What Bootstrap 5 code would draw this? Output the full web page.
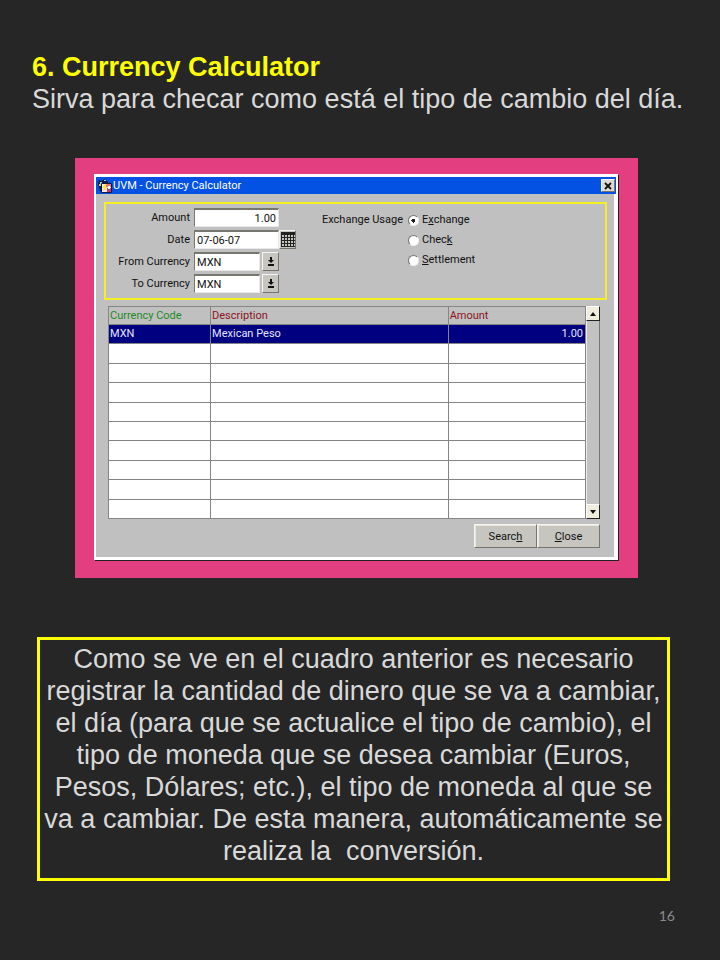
<!DOCTYPE html>
<html lang="es">
<head>
<meta charset="utf-8">
<meta name="viewport" content="width=device-width, initial-scale=1">
<title>Currency Calculator</title>
<link href="https://cdn.jsdelivr.net/npm/bootstrap@5.3.0/dist/css/bootstrap.min.css" rel="stylesheet">
<style>
  body { background: #262626; color: #d9d9d9; font: 27px/32px "Liberation Sans", Arial, sans-serif; }
  .slide { padding: 51px 32px 32px; }
  .slide-title { font-size: 27px; line-height: 32px; color: #ff0; }
  .stage { background: #e23e80; margin: 43px 50px 0 43px; padding: 16px 20px 18px 19px; }
  .win { background: #c0c0c0; border: 2px solid #fff; border-width: 3px 4px 3px 2px; box-shadow: 1px 1px 0 #222; color: #111; font-family: Roboto, "Liberation Sans", sans-serif; font-size: 11px; line-height: 14px; }
  .win-bar { background: #0452e4; color: #fff; height: 17px; padding: 0 1px 0 2px; margin-right: -2px; }
  .win-bar h2 { font-size: 11px; line-height: 17px; }
  .raised { background: #c6c5c0; border: 1px solid; border-color: #f4f4f0 #77746c #77746c #f4f4f0; color: #111; border-radius: 0; padding: 0; line-height: 1; }
  .close-x { width: 14px; height: 13px; background: #dedbd2; }
  .win-body { padding: 8px 14px 9px 8px; }
  .query { border: 2px solid #f4ee26; padding: 4px 4px 5px 0; margin-right: -7px; }
  .fields { display: grid; grid-template-columns: 84px auto; column-gap: 4px; row-gap: 3px; grid-auto-rows: 19px; align-items: center; }
  .fields label { text-align: right; }
  .field { background: #fff; border: 1px solid #e8e8e8; border-top: 2px solid #77776f; border-left-color: #77776f; color: #111; width: 85px; height: 19px; padding: 0 2px; line-height: 14px; border-radius: 0; }
  .field-code { width: 66px; }
  .tool { width: 17px; height: 19px; }
  .lov { gap: 2px; }
  .usage { margin-left: 26px; padding-top: 5px; }
  .usage-label { width: 86px; }
  .choice { height: 20px; line-height: 14px; gap: 3px; }
  .choice input { appearance: none; width: 11px; height: 11px; margin: 2px 0 0; border-radius: 50%; background: #fff; border: 1px solid; border-color: #77756c #f0f0ec #f0f0ec #77756c; }
  .choice input:checked { background: radial-gradient(circle, #222 0 2px, #fff 2px); }
  .results { margin: 6px 0 0 4px; }
  .grid-data { table-layout: fixed; border-collapse: collapse; color: #111; height: 213px; }
  .grid-data th, .grid-data td { border: 1px solid #858585; padding: 0 2px 0 1px; font-weight: 400; line-height: 14px; }
  .grid-data td { background: #fff; height: 19px; }
  .grid-data th { color: #8a1520; height: 18px; }
  .grid-data th.key { color: #1d8a22; }
  .grid-data .picked td { background: #000080; color: #e6e6ff; }
  .c-code { width: 21.4%; }
  .c-amt { width: 28.8%; }
  .scroller { width: 14px; background: #c2c2c2; border-right: 1px solid #77756c; border-left: 1px solid #eee; }
  .scroller .raised { width: 14px; height: 15px; margin-left: -1px; background: #f0eddc; border-color: #fff #222 #222 #fff; }
  .actions { margin-top: 5px; }
  .actions .raised { width: 63px; height: 24px; font-size: 11px; box-shadow: inset 1px 1px 0 #e8e6df; }
  .note { border: 3px solid #ff0; margin: 59px 18px 0 5px; padding: 3px 2px 11px; }
  .page-no { font: 14px/18px Lato, sans-serif; color: #8b8b8b; margin: 26px 13px 0 0; }
  .win svg { display: block; }
</style>
<script src="https://cdn.jsdelivr.net/npm/bootstrap@5.3.0/dist/js/bootstrap.bundle.min.js"></script>
</head>
<body>
<main class="slide">
  <h1 class="slide-title fw-bold m-0">6. Currency Calculator</h1>
  <p class="m-0">Sirva para checar como está el tipo de cambio del día.</p>

  <section class="stage">
    <div class="win">
      <header class="win-bar d-flex align-items-center">
        <svg width="15" height="16" viewBox="0 0 15 16" aria-hidden="true">
          <path d="M1 2l3 1 2-2 2 1 2 2v2H3v7H2L1 9 0 6z" fill="#151a3c"/>
          <path d="M2 4h2v2H2zM6 2h2v1H6z" fill="#7ee0e0"/><path d="M1 6h2v2H1z" fill="#e8c84c"/>
          <path d="M3.5 5.500h10v9h-10z" fill="#f7e9ef" stroke="#181840"/>
          <path d="M8 6h5v3H8z" fill="#e86b94"/><path d="M9 10h4v4H9z" fill="#c43a76"/>
          <path d="M7 6L4 10h2l-2 4 5-5H7l2-3z" fill="#ffe818"/><path d="M10 8h2v3h-2z" fill="#fff"/>
        </svg>
        <h2 class="m-0 fw-normal flex-grow-1">UVM - Currency Calculator</h2>
        <button type="button" class="raised close-x d-flex align-items-center justify-content-center" aria-label="Close window">
          <svg width="8" height="8" viewBox="0 0 8 8"><path d="M1 1l6 6M7 1L1 7" stroke="#111" stroke-width="1.8"/></svg>
        </button>
      </header>
      <div class="win-body">
        <form class="query d-flex align-items-start">
          <div class="fields">
            <label for="amount">Amount</label>
            <input id="amount" class="field text-end" value="1.00">
            <label for="date">Date</label>
            <div class="d-flex">
              <input id="date" class="field" value="07-06-07">
              <button type="button" class="raised tool d-flex align-items-center justify-content-center" aria-label="Calendar">
                <svg width="14" height="15" viewBox="0 0 14 15"><path d="M0 0h14v3H0z" fill="#222"/><path d="M.5 1v14M3.5 1v14M6.5 1v14M9.5 1v14M12.5 1v14M0 5.500h14M0 8.500h14M0 11.500h14M0 14.500h14" stroke="#222"/></svg>
              </button>
            </div>
            <label for="from">From Currency</label>
            <div class="lov d-flex">
              <input id="from" class="field field-code" value="MXN">
              <button type="button" class="raised tool d-flex align-items-center justify-content-center" aria-label="List of currencies">
                <svg width="8" height="9" viewBox="0 0 8 9"><path d="M3 0h2v3h2L4 6 1 3h2zM1 7h6v2H1z" fill="#111"/></svg>
              </button>
            </div>
            <label for="to">To Currency</label>
            <div class="lov d-flex">
              <input id="to" class="field field-code" value="MXN">
              <button type="button" class="raised tool d-flex align-items-center justify-content-center" aria-label="List of currencies">
                <svg width="8" height="9" viewBox="0 0 8 9"><path d="M3 0h2v3h2L4 6 1 3h2zM1 7h6v2H1z" fill="#111"/></svg>
              </button>
            </div>
          </div>
          <div class="usage d-flex" role="radiogroup" aria-labelledby="usage-label">
            <span id="usage-label" class="usage-label">Exchange Usage</span>
            <div>
              <div class="choice d-flex"><input type="radio" name="usage" id="u1" checked><label for="u1">E<u>x</u>change</label></div>
              <div class="choice d-flex"><input type="radio" name="usage" id="u2"><label for="u2">Chec<u>k</u></label></div>
              <div class="choice d-flex"><input type="radio" name="usage" id="u3"><label for="u3"><u>S</u>ettlement</label></div>
            </div>
          </div>
        </form>

        <div class="results d-flex">
          <table class="grid-data flex-grow-1">
            <colgroup><col class="c-code"><col><col class="c-amt"></colgroup>
            <thead><tr><th class="key">Currency Code</th><th>Description</th><th>Amount</th></tr></thead>
            <tbody>
              <tr class="picked"><td>MXN</td><td>Mexican Peso</td><td class="text-end">1.00</td></tr>
              <tr><td></td><td></td><td></td></tr>
              <tr><td></td><td></td><td></td></tr>
              <tr><td></td><td></td><td></td></tr>
              <tr><td></td><td></td><td></td></tr>
              <tr><td></td><td></td><td></td></tr>
              <tr><td></td><td></td><td></td></tr>
              <tr><td></td><td></td><td></td></tr>
              <tr><td></td><td></td><td></td></tr>
              <tr><td></td><td></td><td></td></tr>
            </tbody>
          </table>
          <div class="scroller d-flex flex-column justify-content-between">
            <button type="button" class="raised d-flex align-items-center justify-content-center" aria-label="Scroll up"><svg width="6" height="4" viewBox="0 0 6 4"><path d="M3 0l3 4H0z" fill="#111"/></svg></button>
            <button type="button" class="raised d-flex align-items-center justify-content-center" aria-label="Scroll down"><svg width="6" height="4" viewBox="0 0 6 4"><path d="M0 0h6L3 4z" fill="#111"/></svg></button>
          </div>
        </div>
        <div class="actions d-flex justify-content-end">
          <button type="button" class="raised">Searc<u>h</u></button>
          <button type="button" class="raised"><u>C</u>lose</button>
        </div>
      </div>
    </div>
  </section>

  <p class="note text-center mb-0">Como se ve en el cuadro anterior es necesario registrar la cantidad de dinero que se va a cambiar, el día (para que se actualice el tipo de cambio), el tipo de moneda que se desea cambiar (Euros, Pesos, Dólares; etc.), el tipo de moneda al que se va a cambiar. De esta manera, automáticamente se realiza la&nbsp; conversión.</p>
  <div class="page-no text-end">16</div>
</main>
</body>
</html>
